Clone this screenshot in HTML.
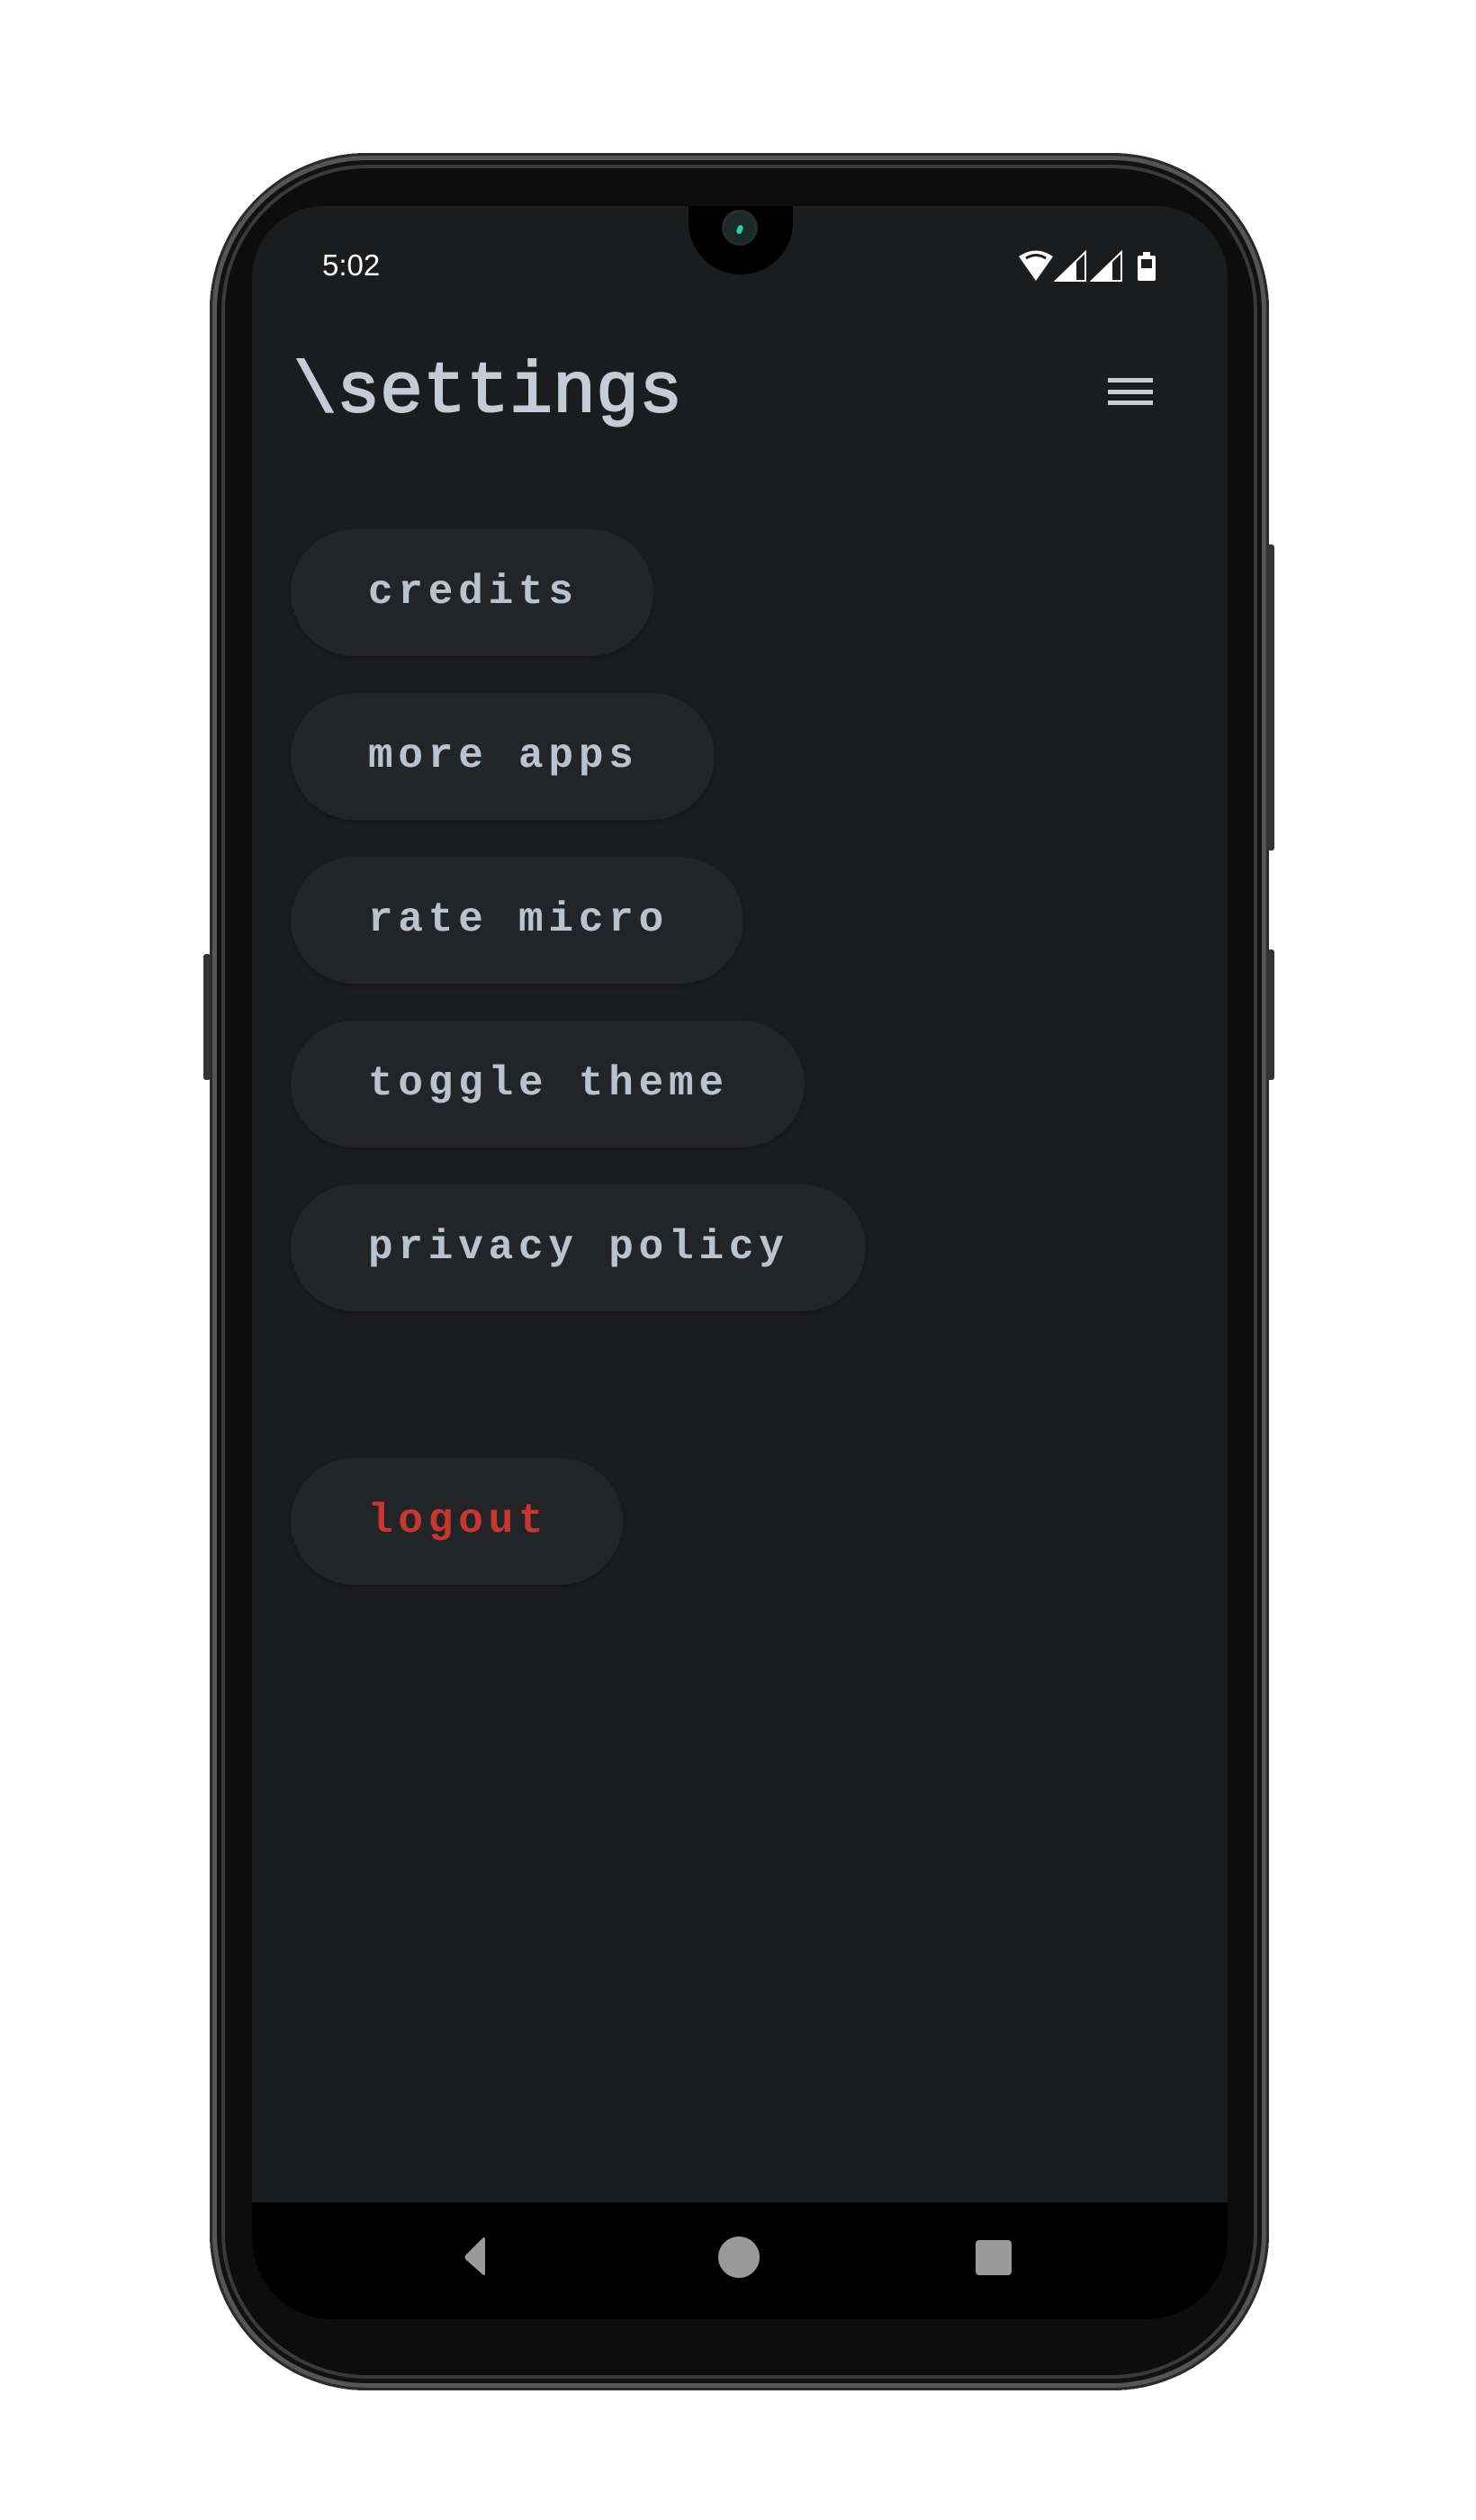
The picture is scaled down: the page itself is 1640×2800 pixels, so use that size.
<!DOCTYPE html>
<html><head><meta charset="utf-8"><style>
html,body{margin:0;padding:0;background:#fff;}
body{width:1640px;height:2800px;position:relative;overflow:hidden;font-family:"Liberation Mono",monospace;}
.phone{position:absolute;left:233px;top:170px;width:1177px;height:2486px;border-radius:175px;background:#0d0d0d;box-shadow:inset 0 0 0 3px #2a2a2a,inset 0 0 0 8px #555,inset 0 0 0 13px #111,inset 0 0 0 17px #3a3a3a;}
.side{position:absolute;background:#333;border-radius:3px;}
.screen{position:absolute;left:280px;top:229px;width:1084px;height:2348px;border-radius:80px 80px 90px 90px;background:#1b1c1e;overflow:hidden;}
.nav{position:absolute;left:0;bottom:0;width:100%;height:130px;background:#000;}
.notch{position:absolute;left:765px;top:229px;width:116px;height:76px;background:#000;border-radius:0 0 58px 58px;}
.txt{position:absolute;color:#fff;}
.btn{position:absolute;left:323px;height:141px;border-radius:71px;background:#232427;box-shadow:0 2px 4px rgba(0,0,0,.25);}
.btn span{position:absolute;left:86px;top:0;line-height:141px;font-weight:bold;font-size:46px;letter-spacing:5.8px;color:#b9c3d0;white-space:pre;}
</style></head><body>
<div class="phone"></div>
<div class="side" style="left:1408px;top:605px;width:8px;height:340px"></div>
<div class="side" style="left:1408px;top:1055px;width:8px;height:145px"></div>
<div class="side" style="left:226px;top:1060px;width:8px;height:140px"></div>
<div class="screen"><div class="nav"></div></div>
<div class="notch"></div>
<div style="position:absolute;left:805px;top:236px;width:34px;height:34px;border-radius:50%;background:#1a2a28;box-shadow:0 0 0 3px #2a2a2a"><div style="position:absolute;left:14px;top:14px;width:6px;height:10px;background:#2bd0a0;border-radius:3px;transform:rotate(20deg)"></div></div>
<div class="txt" style="left:358px;top:276px;font-family:'Liberation Sans',sans-serif;font-size:33px;">5:02</div>
<svg style="position:absolute;left:1128px;top:276px" width="165" height="40" viewBox="0 0 165 40">
<path d="M4 9 Q23 -4 42 9 L23 36 Z" fill="#fff"/>
<path d="M12 11 Q23 4 34 11" stroke="#1b1c1e" stroke-width="3" fill="none"/>
<path d="M45 36 L78 4 L78 36 Z" fill="none" stroke="#fff" stroke-width="2"/>
<path d="M45 36 L68 14 L68 36 Z" fill="#fff"/>
<path d="M85 36 L118 4 L118 36 Z" fill="none" stroke="#fff" stroke-width="2"/>
<path d="M85 36 L108 14 L108 36 Z" fill="#fff"/>
<rect x="136" y="8" width="20" height="28" rx="2" fill="#fff"/><rect x="142" y="4" width="8" height="5" fill="#fff"/>
<rect x="140" y="12" width="12" height="10" fill="#1b1c1e"/>
</svg>
<div class="txt" style="left:326px;top:392px;font-size:80px;color:#c5ccd8;letter-spacing:0px;line-height:90px;-webkit-text-stroke:2px #c5ccd8;">\settings</div>
<div style="position:absolute;left:1231px;top:420px;width:50px;height:5px;background:#c8ccd2"></div>
<div style="position:absolute;left:1231px;top:433px;width:50px;height:5px;background:#c8ccd2"></div>
<div style="position:absolute;left:1231px;top:445px;width:50px;height:5px;background:#c8ccd2"></div>
<div class="btn" style="top:588px;width:403px"><span>credits</span></div>
<div class="btn" style="top:770px;width:471px"><span>more apps</span></div>
<div class="btn" style="top:952px;width:503px"><span>rate micro</span></div>
<div class="btn" style="top:1134px;width:571px"><span>toggle theme</span></div>
<div class="btn" style="top:1316px;width:639px"><span>privacy policy</span></div>
<div class="btn" style="top:1620px;width:369px"><span style="color:#c8372f">logout</span></div>
<svg style="position:absolute;left:0;top:2480px" width="1640" height="60">
<path d="M536 7 Q539 4 539 9 L539 45 Q539 50 536 47 L518 31 Q515 28 518 25 Z" fill="#9a9a9a"/>
<ellipse cx="821" cy="28" rx="23" ry="23" fill="#9a9a9a"/>
<rect x="1084" y="9" width="40" height="39" rx="4" fill="#9a9a9a"/>
</svg>
</body></html>
